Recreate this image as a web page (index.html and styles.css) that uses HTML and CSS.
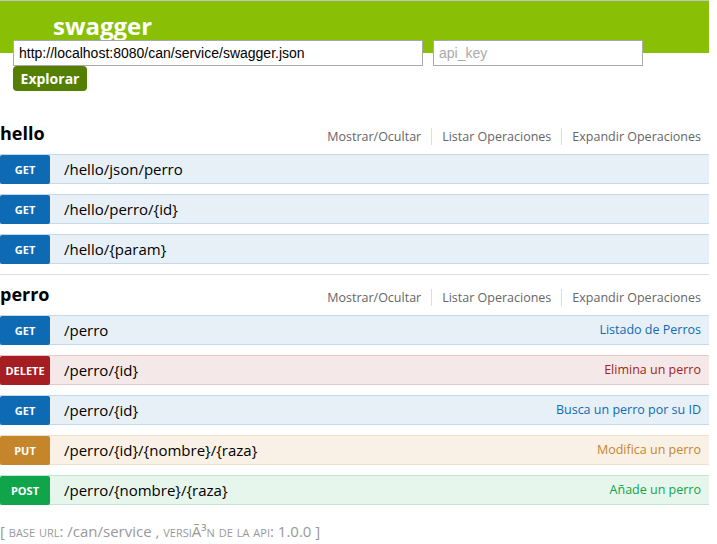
FILE: index.html
```html
<!DOCTYPE html>
<html>
<head>
<meta charset="utf-8">
<link rel="stylesheet" href="styles.css">
</head>
<body>
<div class="page">
  <header class="header">
    <div class="logo">swagger</div>
    <form class="explore">
      <div class="inputs">
        <input class="url" type="text" value="http://localhost:8080/can/service/swagger.json">
        <input class="key" type="text" placeholder="api_key">
      </div>
      <button type="button" class="btn">Explorar</button>
    </form>
  </header>

  <main class="resources">
    <section class="resource">
      <div class="res-head">
        <h2 class="res-title">hello</h2>
        <ul class="res-links">
          <li>Mostrar/Ocultar</li>
          <li>Listar Operaciones</li>
          <li>Expandir Operaciones</li>
        </ul>
      </div>
      <div class="op get"><span class="verb">GET</span><span class="path">/hello/json/perro</span><span class="desc"></span></div>
      <div class="op get"><span class="verb">GET</span><span class="path">/hello/perro/{id}</span><span class="desc"></span></div>
      <div class="op get"><span class="verb">GET</span><span class="path">/hello/{param}</span><span class="desc"></span></div>
    </section>

    <section class="resource last">
      <div class="res-head">
        <h2 class="res-title">perro</h2>
        <ul class="res-links">
          <li>Mostrar/Ocultar</li>
          <li>Listar Operaciones</li>
          <li>Expandir Operaciones</li>
        </ul>
      </div>
      <div class="op get"><span class="verb">GET</span><span class="path">/perro</span><span class="desc">Listado de Perros</span></div>
      <div class="op delete"><span class="verb">DELETE</span><span class="path">/perro/{id}</span><span class="desc">Elimina un perro</span></div>
      <div class="op get"><span class="verb">GET</span><span class="path">/perro/{id}</span><span class="desc">Busca un perro por su ID</span></div>
      <div class="op put"><span class="verb">PUT</span><span class="path">/perro/{id}/{nombre}/{raza}</span><span class="desc">Modifica un perro</span></div>
      <div class="op post"><span class="verb">POST</span><span class="path">/perro/{nombre}/{raza}</span><span class="desc">Añade un perro</span></div>
    </section>
  </main>

  <footer class="footer">[ <span class="sc">base url</span>: /can/service , <span class="sc">versiÃ³n de la api</span>: 1.0.0 ]</footer>
</div>
</body>
</html>
```

FILE: styles.css
```css
html, body {
  margin: 0;
  padding: 0;
  background: #fff;
}
body {
  font-family: "Open Sans", "Noto Sans", sans-serif;
  color: #000;
}
.page {
  width: 709px;
}
.header {
  height: 52px;
  background: #89bf04;
  border-top: 1px solid #c4c4c4;
  box-sizing: content-box;
}
.logo {
  padding: 11px 0 0 53px;
  height: 28px;
  line-height: 28px;
  font-size: 24px;
  font-weight: 700;
  color: #fff;
}
.explore {
  margin: 0 0 0 13px;
}
.inputs {
  display: flex;
  gap: 10px;
}
.inputs input {
  box-sizing: border-box;
  height: 26px;
  margin: 0;
  border: 1px solid #aaa;
  padding: 0 5px;
  font-family: "Liberation Sans", Arial, sans-serif;
  font-size: 14px;
  color: #000;
  background: #fff;
  outline: none;
}
.inputs .url { width: 410px; }
.inputs .key { width: 210px; }
.inputs input::placeholder { color: #aaa; }
.btn {
  display: block;
  margin: 0;
  height: 25px;
  width: 74px;
  padding: 0;
  border: none;
  border-radius: 4px;
  background: #547f00;
  color: #fff;
  font-family: "Open Sans", sans-serif;
  font-weight: 700;
  font-size: 14px;
  line-height: 25px;
}
.resources {
  margin-top: 61px;
}
.resource {
  border-bottom: 1px solid #ddd;
}
.resource.last {
  border-bottom: none;
}
.res-head {
  height: 40px;
  display: flex;
  justify-content: space-between;
  align-items: flex-start;
}
.res-title {
  margin: 0;
  padding-top: 7px;
  font-size: 18px;
  line-height: 24px;
  font-weight: 700;
}
.res-links {
  list-style: none;
  margin: 0;
  padding: 14px 8px 0 0;
  display: flex;
  font-size: 12.5px;
  line-height: 17px;
  color: #666;
}
.res-links li {
  padding: 0 10px;
  border-left: 1px solid #ddd;
}
.res-links li:first-child {
  border-left: none;
  padding-left: 0;
}
.res-links li:last-child {
  padding-right: 0;
}
.op {
  display: flex;
  align-items: center;
  height: 30px;
  box-sizing: border-box;
  margin-bottom: 10px;
  border-top: 1px solid;
  border-bottom: 1px solid;
}
.verb {
  flex: none;
  width: 50px;
  height: 29px;
  align-self: flex-start;
  border-radius: 2px;
  color: #fff;
  font-size: 11px;
  font-weight: 700;
  text-align: center;
  line-height: 29px;
}
.path {
  flex: 1;
  padding-left: 14px;
  padding-bottom: 1px;
  font-size: 15px;
  line-height: 20px;
  color: #000;
}
.desc {
  padding-right: 8px;
  font-size: 12.5px;
  line-height: 20px;
}
.get { background: #e7f0f7; border-color: #c3d9ec; }
.get .verb { background: #0f6ab4; }
.get .desc { color: #0f6ab4; }
.delete { background: #f5e8e8; border-color: #e8c6c7; }
.delete .verb { background: #a41e22; }
.delete .desc { color: #a41e22; }
.put { background: #faf1e6; border-color: #f0e0ca; }
.put .verb { background: #c5862b; }
.put .desc { color: #c5862b; }
.post { background: #e7f6ec; border-color: #c3e8d1; }
.post .verb { background: #10a54a; }
.post .desc { color: #10a54a; }
.footer {
  padding-top: 5px;
  font-size: 15px;
  line-height: 22px;
  color: #999;
}
.sc {
  font-variant: small-caps;
}
```
